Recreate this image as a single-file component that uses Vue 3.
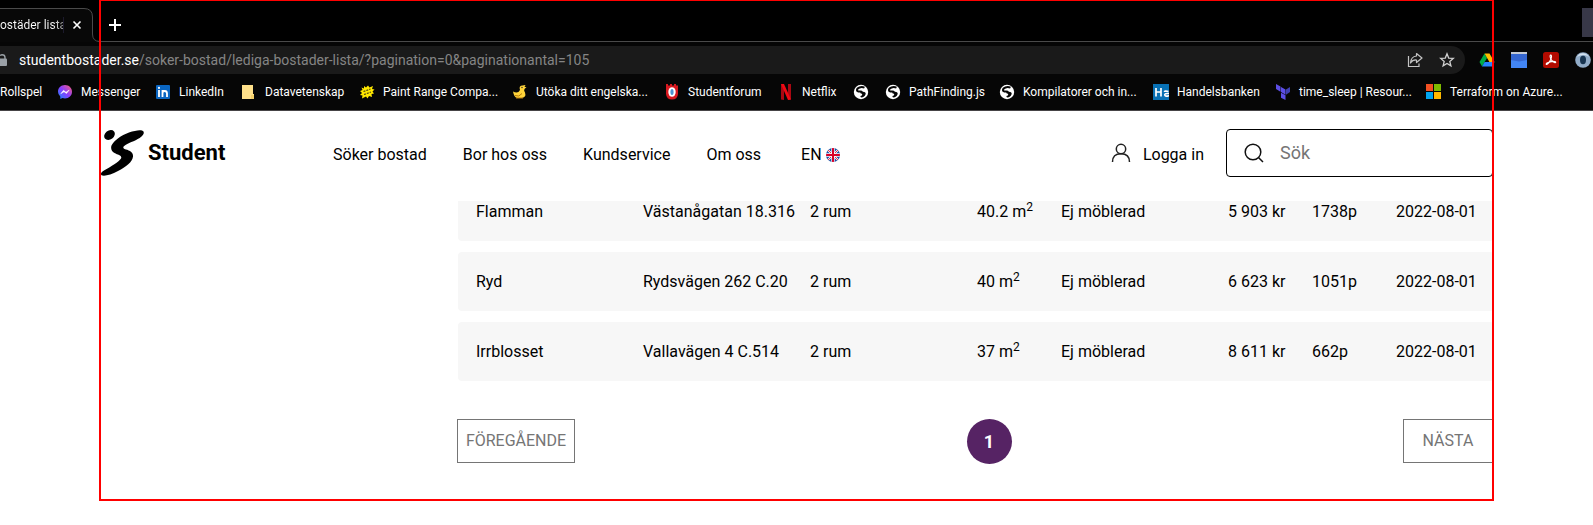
<script setup>
const bookmarks = [
  { label: 'Rollspel', icon: '' },
  { label: 'Messenger', icon: 'messenger' },
  { label: 'LinkedIn', icon: 'linkedin' },
  { label: 'Datavetenskap', icon: 'note' },
  { label: 'Paint Range Compa...', icon: 'burst' },
  { label: 'Utöka ditt engelska...', icon: 'duck' },
  { label: 'Studentforum', icon: 'shield' },
  { label: 'Netflix', icon: 'netflix' },
  { label: '', icon: 'globe' },
  { label: 'PathFinding.js', icon: 'globe' },
  { label: 'Kompilatorer och in...', icon: 'globe' },
  { label: 'Handelsbanken', icon: 'bank' },
  { label: 'time_sleep | Resour...', icon: 'terraform' },
  { label: 'Terraform on Azure...', icon: 'microsoft' }
]

const navLinks = ['Söker bostad', 'Bor hos oss', 'Kundservice', 'Om oss']

const homes = [
  { area: 'Flamman', address: 'Västanågatan 18.316', rooms: '2 rum', size: '40.2', rent: '5 903 kr', points: '1738p' },
  { area: 'Ryd', address: 'Rydsvägen 262 C.20', rooms: '2 rum', size: '40', rent: '6 623 kr', points: '1051p' },
  { area: 'Irrblosset', address: 'Vallavägen 4 C.514', rooms: '2 rum', size: '37', rent: '8 611 kr', points: '662p' }
]
</script>

<template>
  <div class="screen">
    <div class="browser">
      <div class="tabstrip">
        <div class="tab">
          <svg class="tab-shape" width="100" height="34" viewBox="0 0 100 34">
            <path d="M0 .5H84Q92.5 .5 92.5 9V26Q92.5 33.5 100 33.5V34H0Z" fill="#080808" />
            <path d="M0 .5H84Q92.5 .5 92.5 9V26Q92.5 33.5 100 33.5" fill="none" stroke="#4a4a4a" />
          </svg>
          <span class="tab-title">ostäder lista</span>
          <button class="tab-close" aria-label="Stäng flik">
            <svg width="10" height="10" viewBox="0 0 10 10"><path d="M1.5 1.5 8.5 8.5M8.5 1.5 1.5 8.5" stroke="#fff" stroke-width="1.6" /></svg>
          </button>
        </div>
        <button class="new-tab" aria-label="Ny flik">
          <svg width="12" height="12" viewBox="0 0 12 12"><path d="M6 0V12M0 6H12" stroke="#fff" stroke-width="2" /></svg>
        </button>
        <span class="window-control"></span>
      </div>

      <div class="toolbar">
        <div class="omnibox">
          <svg class="lock" width="7" height="12" viewBox="0 0 7 12">
            <path d="M0 4.500H6Q7 4.500 7 5.500V11Q7 12 6 12H0Z" fill="#9aa0a6" />
            <path d="M0 1.500Q1 .8 2 .8Q5 .8 5 3.500V5" fill="none" stroke="#9aa0a6" stroke-width="1.400" />
          </svg>
          <span class="url">studentbostader.se<span class="path">/soker-bostad/lediga-bostader-lista/?pagination=0&amp;paginationantal=105</span></span>
          <button class="tool" aria-label="Dela">
            <svg width="16" height="16" viewBox="0 0 16 16" fill="none" stroke="#c4c4c4" stroke-width="1.200">
              <path d="M1.500 4V14.500H12V11.500" />
              <path d="M9.500 1.500 15 6 9.500 10.500V8Q5.500 7.700 3.500 11Q4 4.500 9.500 4Z" stroke-linejoin="round" />
            </svg>
          </button>
          <button class="tool" aria-label="Bokmärk">
            <svg width="16" height="16" viewBox="0 0 16 16"><path d="M8 1.800 9.700 6.100 14.300 6.400 10.800 9.400 11.900 13.900 8 11.400 4.100 13.900 5.200 9.400 1.700 6.400 6.300 6.100Z" fill="none" stroke="#d0d0d0" stroke-width="1.300" /></svg>
          </button>
        </div>
        <div class="extensions">
          <svg width="16" height="16" viewBox="0 0 16 16">
            <path d="M5.500 1.500 0.500 10 3 14.500 8 6Z" fill="#00ac47" />
            <path d="M5.500 1.500H10.500L15.500 10H10.400Z" fill="#ffba00" />
            <path d="M3 14.500 5.600 10H15.500L13 14.500Z" fill="#2684fc" />
          </svg>
          <svg width="16" height="16" viewBox="0 0 16 16">
            <rect width="16" height="16" fill="#4285f4" /><rect width="16" height="2" fill="#c4c9d2" />
            <path d="M0 2H16V8L8 9.500 0 8Z" fill="#3566cf" />
          </svg>
          <svg width="16" height="16" viewBox="0 0 16 16">
            <rect width="16" height="16" rx="2.500" fill="#b30b00" />
            <path d="M7.500 3Q9.300 3 8 7Q6 11.500 3.700 12.500Q2.500 12.500 4 11Q8 8.800 12 9.500Q13.500 10.500 12 10.700Q9 9.800 7.800 7Q6.500 3.700 7.500 3Z" fill="none" stroke="#fff" stroke-width="1.100" />
          </svg>
          <svg width="16" height="16" viewBox="0 0 16 16">
            <circle cx="8" cy="8" r="7.800" fill="#91acc8" /><path d="M2 5Q4 1 8 1.200Q12 1.200 14 5Q11 2.500 8 3Q5 3 2 5Z" fill="#d4e2ef" />
            <ellipse cx="8" cy="8" rx="3" ry="4.200" fill="#173450" />
          </svg>
        </div>
      </div>

      <nav class="bookmarks" aria-label="Bokmärken">
        <a v-for="(mark, i) in bookmarks" :key="i" class="bookmark" href="#" :aria-label="mark.label || 'Webbplats'">
          <svg v-if="mark.icon" width="16" height="16" viewBox="0 0 16 16">
            <g v-if="mark.icon === 'messenger'">
              <linearGradient id="msg" x1="0" y1="1" x2="1" y2="0"><stop offset="0" stop-color="#1688ff" /><stop offset=".5" stop-color="#8a3dff" /><stop offset="1" stop-color="#ff6070" /></linearGradient>
              <path d="M8 1C4 1 1 3.800 1 7.700Q1 10.500 3.300 12.600V15L5.500 14Q6.700 14.400 8 14.400C12 14.400 15 11.500 15 7.700S12 1 8 1Z" fill="url(#msg)" />
              <path d="M3.800 9.700 6.500 6.300 9 8.200 12.200 6 9.500 9.500 7 7.700Z" fill="#fff" stroke="#fff" stroke-width=".5" />
            </g>
            <g v-else-if="mark.icon === 'linkedin'">
              <rect x="1" y="1" width="14" height="14" rx="1" fill="#0a66c2" />
              <path d="M4 6V13M7.500 13V6M7.500 9Q7.500 7 9.700 7Q12 7 12 9.500V13" fill="none" stroke="#fff" stroke-width="1.800" /><circle cx="4" cy="3.900" r="1.100" fill="#fff" />
            </g>
            <g v-else-if="mark.icon === 'note'"><path d="M1 1H12V10H13V15H1Z" fill="#ffe08a" /><path d="M10 11H13V15H10Z" fill="#f4cf68" /></g>
            <g v-else-if="mark.icon === 'burst'">
              <path d="M5 2 7 3.500 9 1.500 10.500 3.500 14 2 13 5 15.500 5.500 13.500 7.500 15 9.500 12.500 10 13 13 10 12 8.500 14.500 7 12.500 3 14.500 3.500 11.500 1 11 3 9 1 7 3.500 6 2.500 3.500 5 4.500Z" fill="#ffe800" />
              <path d="M4.500 7.500 11.500 5M5 10.500 12 8" stroke="#4b4610" stroke-width="1.200" stroke-dasharray="2 1" />
            </g>
            <g v-else-if="mark.icon === 'duck'">
              <path d="M8 6Q6.500 1.500 10.500 1.500L13.500 1 12.500 3 14.500 3 12.500 5Q11.500 6.500 13 8.500Q14.500 13 10 14H5Q2 13 1 7.500Q4 9 6.500 8Z" fill="#ffd43a" />
              <path d="M3 11.500Q7 13.500 10 9.500M4 14H11" fill="none" stroke="#b87b0c" /><circle cx="10" cy="3.500" r=".7" fill="#222" />
            </g>
            <g v-else-if="mark.icon === 'shield'">
              <path d="M2 0H4V1.500H6V0H8V1.500H10V0H12V1.500H14V10Q13.500 15.500 8 15.500T2 10Z" fill="#d71920" />
              <ellipse cx="8" cy="8" rx="3.700" ry="4.800" fill="#fff" /><ellipse cx="8" cy="8" rx="1.600" ry="3" fill="#4c93d1" />
            </g>
            <g v-else-if="mark.icon === 'netflix'"><path d="M3 0H6V16L3 15.500ZM10 0H13V15.500L10 16Z" fill="#a90812" /><path d="M3 0H6L13 15.500 10 16Z" fill="#f00914" /></g>
            <g v-else-if="mark.icon === 'globe'">
              <circle cx="8" cy="8" r="7.200" fill="#fff" />
              <path d="M11.500 3.700Q9 2.600 6.500 3.500Q3.800 4.500 4 6.300Q4.300 7.700 7 7.600Q8.600 7.500 9 8.300" fill="none" stroke="#080808" stroke-width="2" />
              <path d="M7 8.300Q11 7 12.700 9Q12.800 12 9 13.600Q7.500 13.500 7.300 12Q9.800 11.500 9 9.800Q7.500 9.800 7 8.300Z" fill="#080808" />
            </g>
            <g v-else-if="mark.icon === 'bank'">
              <rect width="16" height="16" fill="#0871b5" />
              <path d="M3 4V12.500M8 4V12.500M3 8H8M15.500 7.500Q11.500 6.500 11.500 8M16 9.500Q11.500 9.300 11.800 11Q12.500 13 16 11.500" fill="none" stroke="#fff" stroke-width="1.700" />
            </g>
            <g v-else-if="mark.icon === 'terraform'">
              <path d="M1 0 5.500 2.600V7.700L1 5.100ZM6 3 10.500 5.600V10.700L6 8.100ZM6 8.700 10.500 11.300V16L6 13.700Z" fill="#5c4ee5" /><path d="M11 5.600 15 3V8L11 10.700Z" fill="#4040b2" />
            </g>
            <g v-else><path d="M0 0H7V7H0Z" fill="#f25022" /><path d="M8 0H15V7H8Z" fill="#7fba00" /><path d="M0 8H7V15H0Z" fill="#00a4ef" /><path d="M8 8H15V15H8Z" fill="#ffb900" /></g>
          </svg>
          <span v-if="mark.label">{{ mark.label }}</span>
        </a>
      </nav>
    </div>

    <div class="page">
      <header class="site-header">
        <a class="brand" href="#">
          <svg width="44" height="48" viewBox="0 0 44 48">
            <ellipse cx="8.500" cy="6" rx="5.800" ry="4.400" transform="rotate(-38 8.500 6)" />
            <path d="M42.500 2.500C41 .2 35 1 28 3.500C20 6.500 13 11.500 10.500 16.500C9.500 19.500 10.500 22 13.500 24C17 26 21.500 26.500 20 29.500C18 33 10 37.500 3 41.500C0 43.500-.8 45 .5 46.200C3 47.500 10 46 17 42C25 38 31.500 33 32 27.500C32.500 22.500 27 21 23.500 20C21.500 19 22 17.500 24.500 16C29 13 36 11.500 40.500 7.500C42.500 5.500 43.200 4 42.500 2.500Z" />
          </svg>
          <span>Student</span>
        </a>
        <nav class="site-nav">
          <a v-for="link in navLinks" :key="link" href="#">{{ link }}</a>
          <a class="language" href="#">EN
            <svg width="14" height="14" viewBox="0 0 14 14">
              <clipPath id="flag"><circle cx="7" cy="7" r="7" /></clipPath>
              <g clip-path="url(#flag)">
                <rect width="14" height="14" fill="#1d4fa3" />
                <path d="M0 0 14 14M14 0 0 14" stroke="#fff" stroke-width="2" /><path d="M0 0 14 14M14 0 0 14" stroke="#d80027" stroke-width=".8" />
                <path d="M7 0V14M0 7H14" stroke="#fff" stroke-width="3.400" /><path d="M7 0V14M0 7H14" stroke="#d80027" stroke-width="2" />
              </g>
            </svg>
          </a>
        </nav>
        <a class="login" href="#">
          <svg width="20" height="20" viewBox="0 0 20 20" fill="none" stroke="#222" stroke-width="1.500"><circle cx="10" cy="6" r="4.700" /><path d="M1.500 19Q1.500 10.700 10 10.700T18.500 19" /></svg>
          <span>Logga in</span>
        </a>
        <label class="search">
          <svg width="20" height="20" viewBox="0 0 20 20" fill="none" stroke="#111" stroke-width="1.500"><circle cx="9" cy="9" r="7.800" /><path d="M14.500 14.500 19 19" /></svg>
          <input type="search" placeholder="Sök" aria-label="Sök" />
        </label>
      </header>

      <main class="results">
        <table>
          <colgroup>
            <col class="wide" /><col class="wide" /><col class="wide" /><col class="narrow" /><col class="wide" /><col class="narrow" /><col class="narrow" /><col />
          </colgroup>
          <tbody>
            <tr v-for="home in homes" :key="home.address">
              <td>{{ home.area }}</td>
              <td>{{ home.address }}</td>
              <td>{{ home.rooms }}</td>
              <td>{{ home.size }} m<sup>2</sup></td>
              <td>Ej möblerad</td>
              <td>{{ home.rent }}</td>
              <td>{{ home.points }}</td>
              <td>2022-08-01</td>
            </tr>
          </tbody>
        </table>
        <div class="pagination">
          <button class="step previous">FÖREGÅENDE</button>
          <button class="current">1</button>
          <button class="step next">NÄSTA</button>
        </div>
      </main>
    </div>
    <div class="frame"></div>
  </div>
</template>

<style>
body { margin: 0; background: #fff; }
</style>

<style scoped>
.screen { position: relative; overflow: hidden; padding-bottom: 24px; }
.screen * { box-sizing: border-box; }
button { border: 0; padding: 0; background: none; font: inherit; color: inherit; }
a { color: inherit; text-decoration: none; }
svg { display: block; flex: none; }

.browser { background: #060606; color: #fff; font: 12px/16px Roboto, "Noto Sans", sans-serif; border-bottom: 1px solid #464446; }
.tabstrip { display: flex; align-items: flex-end; height: 42px; background: #000; border-bottom: 1px solid #4a4a4a; }
.tab { position: relative; display: flex; align-items: center; width: 100px; height: 34px; margin-bottom: -1px; }
.tab-shape { position: absolute; inset: 0; }
.tab-title { position: relative; flex: none; width: 64px; white-space: nowrap; border-right: 1px solid #1c1a2c; background: linear-gradient(90deg, #fff 52px, #888 64px); background-clip: text; color: transparent; }
.tab-close { position: relative; margin-left: 8px; }
.new-tab { margin: 0 auto 10px 9px; }
.window-control { width: 11px; height: 29px; margin-bottom: 4px; background: #383848; }

.toolbar { display: flex; align-items: center; gap: 14px; padding: 4px 2px 0 0; }
.omnibox { flex: 1; display: flex; align-items: center; gap: 16px; height: 28px; padding-right: 10px; border-radius: 0 14px 14px 0; background: #1a1a1a; font-size: 14px; line-height: 20px; }
.lock { margin-right: -4px; }
.url { flex: 1; white-space: nowrap; }
.path { color: #858585; }
.extensions { display: flex; gap: 16px; }
.bookmarks { display: grid; grid-template-columns: 57px 98px 86px 118px 153px 152px 114px 75px 32px 114px 154px 122px 151px 1fr; align-items: center; height: 36px; }
.bookmark { display: flex; align-items: center; gap: 8px; white-space: nowrap; }

.page { padding: 0 100px 0 101px; font: 16px/20px Roboto, "Liberation Sans", sans-serif; color: #000; }
.site-header { position: relative; z-index: 1; display: flex; align-items: center; padding: 18px 0 24px; background: #fff; }
.brand { display: flex; align-items: center; gap: 3px; width: 232px; font: 700 22px/28px Roboto, sans-serif; }
.site-nav { display: flex; flex: 1; gap: 36px; padding-top: 4px; white-space: nowrap; }
.language { display: flex; align-items: center; gap: 4px; margin-left: 4px; }
.login { display: flex; align-items: center; gap: 12px; margin-right: 22px; white-space: nowrap; }
.login span { padding-top: 4px; }
.search { display: flex; align-items: center; gap: 16px; width: 267px; height: 48px; padding: 0 17px; border: 1px solid #000; border-radius: 4px; }
.search input { flex: 1; min-width: 0; padding: 0; border: 0; outline: 0; background: none; font: 18px/24px Roboto, sans-serif; }
.search input::placeholder { color: #757575; opacity: 1; }

.results { margin: -30px 0 0 356px; }
table { width: 100%; table-layout: fixed; border-spacing: 0 11px; margin-left: 1px; }
td { height: 59px; padding: 0 0 0 18px; background: #f7f7f7; white-space: nowrap; }
td:first-child { border-radius: 4px 0 0 4px; }
td:last-child { border-radius: 0 4px 4px 0; }
.wide { width: 167px; }
.narrow { width: 84px; }
sup { font-size: 12px; line-height: 0; }
.pagination { display: flex; align-items: flex-start; justify-content: space-between; margin-top: 27px; padding-bottom: 37px; }
.step { height: 44px; border: 1px solid #757575; color: #757575; }
.previous { width: 118px; }
.next { width: 90px; }
.current { width: 45px; height: 45px; border-radius: 50%; background: #562364; color: #fff; font: 700 18px/20px Roboto, sans-serif; }
.frame { position: absolute; z-index: 2; top: -1px; bottom: 24px; left: 99px; right: 99px; border: 2px solid #f00; pointer-events: none; }
</style>
